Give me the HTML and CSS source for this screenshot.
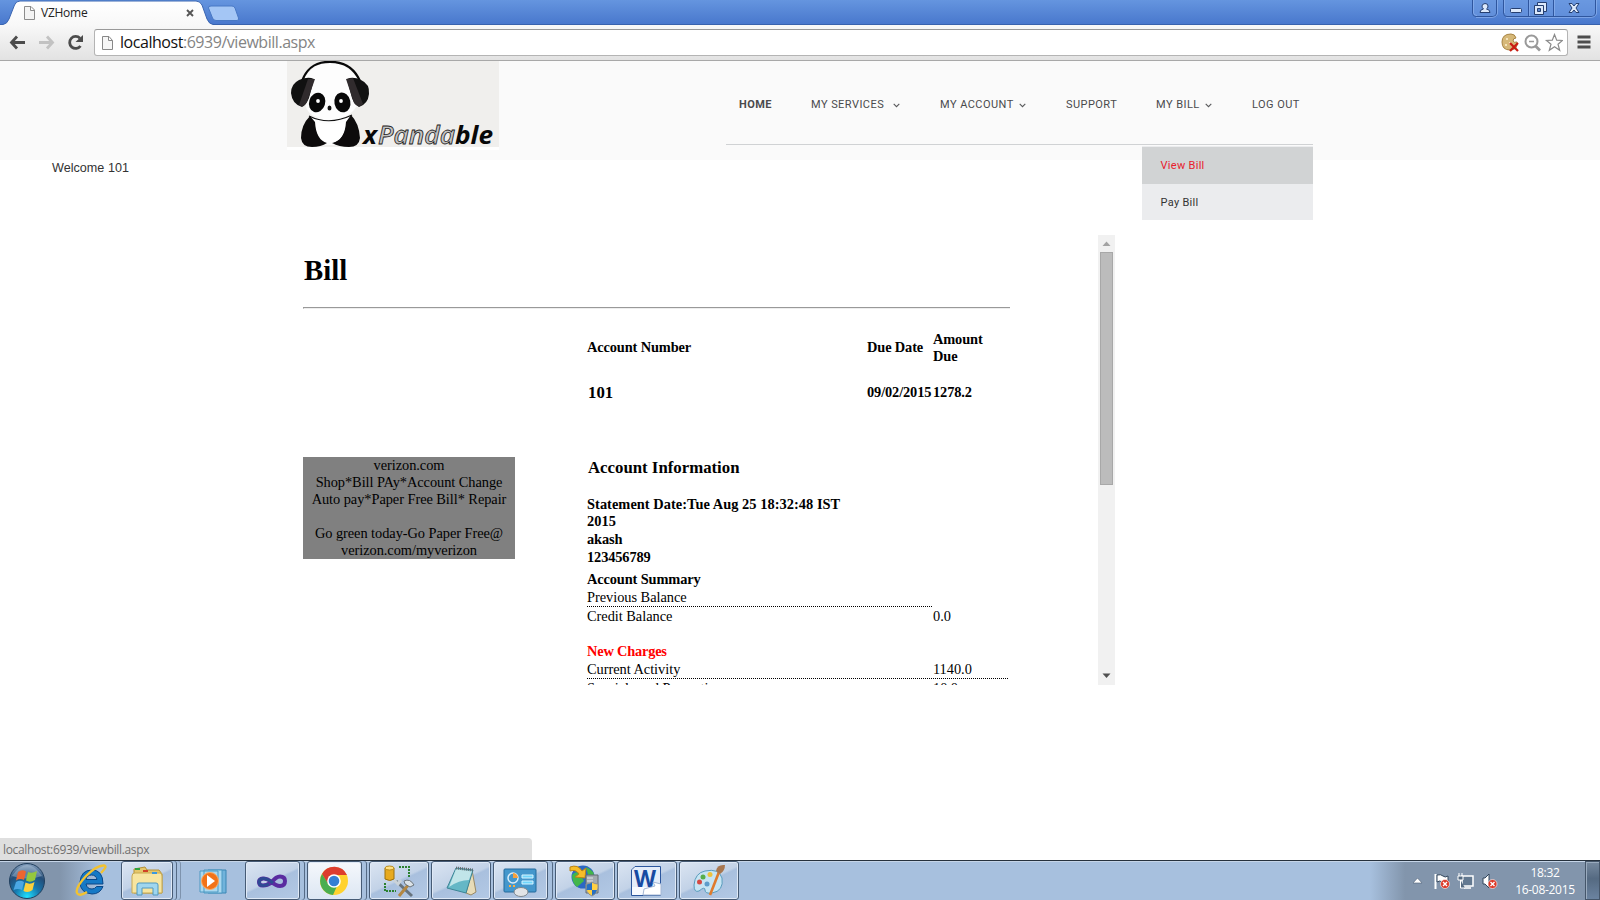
FILE: index.html
```html
<!DOCTYPE html>
<html lang="en">
<head>
<meta charset="utf-8">
<title>VZHome</title>
<link rel="stylesheet" href="styles.css">
</head>
<body>
<div class="screen">
  <header class="titlebar">
    <svg class="tabs" width="260" height="25" viewBox="0 0 260 25">
      <defs><linearGradient id="tabg" x1="0" y1="0" x2="0" y2="1"><stop offset="0" stop-color="#fff"/><stop offset="1" stop-color="#f8f8f8"/></linearGradient></defs>
      <path d="M0 24.5H3Q7 24 9 19L14.500 5Q16 1 20 1H196Q200 1 202 5L207 19Q209 24 213 24.500V25H0Z" fill="url(#tabg)"/>
      <path d="M0 24.500H3Q7 24 9 19L14.500 5Q16 1 20 1H196Q200 1 202 5L207 19Q209 24 213 24.500" fill="none" stroke="#3b66b2"/>
      <path d="M211 6H232Q234 6 235 8L238.500 18Q239 20.500 237 20.500H216Q213.500 20.500 212.500 18L208.500 8Q208 6 211 6Z" fill="#a4c6f5" stroke="#4878c4"/>
      <path d="M24.500 6.500H31L34.500 10V19.500H24.500ZM30.500 6.500V10.500H34.500" fill="#f4f4f4" stroke="#8c8c8c"/>
      <path d="M187 10L193 16M193 10L187 16" stroke="#555" stroke-width="1.900"/>
    </svg>
    <span class="tab-title">VZHome</span>
    <svg class="winbtns" width="128" height="19" viewBox="0 0 128 19">
      <g fill="#6f9be2" fill-opacity=".5" stroke="#2f569e">
        <path d="M.5-1V13Q.5 16.500 4 16.500H21Q24.500 16.500 24.500 13V-1"/>
        <path d="M31.500-1V13Q31.500 16.500 35 16.500H120Q123.500 16.500 123.500 13V-1M56.500 0V16M81.500 0V16"/>
      </g>
      <path d="M1.500 0V13Q2 15.500 5 15.500M25.500 0V14Q24 17.500 20 17.500H4M32.500 0V13M57.500 0V16M82.500 0V16M124.500 0V14Q123 17.500 119 17.500H34" fill="none" stroke="#8db2ee" stroke-opacity=".7"/>
      <g fill="#dce9fb" stroke="#263f70">
        <path d="M13 3.500Q16 3.500 16 6T14.500 9Q18 9.500 18 12.500H8Q8 9.500 11.500 9Q10 8 10 6T13 3.500Z"/>
        <rect x="38.500" y="8.500" width="11" height="4" rx="1"/>
        <path d="M65.500 2.500H74.500V11.500H65.500Z"/><path d="M62.500 5.500H71.500V14.500H62.500Z"/><path d="M65.500 8.500H68.500V11.500H65.500Z" fill="#5c88d2"/>
        <path d="M97 3.500H100L102 6L104 3.500H107L104 8L107 12.500H104L102 10L100 12.500H97L100 8Z"/>
      </g>
    </svg>
  </header>
  <div class="toolbar">
    <svg width="84" height="34" viewBox="0 0 84 34">
      <g fill="none" stroke="#4c4c4c" stroke-width="2.800"><path d="M25 17.500H12M17 11.500L11.500 17.500L17 23.500"/><path d="M39 17.500H52M47 11.500L52.500 17.500L47 23.500" stroke="#c2c2c2"/><path d="M80 13.300A6 6 0 1 0 80.500 21"/></g>
      <path d="M83 10V17H75.500Z" fill="#4c4c4c"/>
    </svg>
    <div class="omnibox">
      <svg width="14" height="18" viewBox="0 0 14 18"><path d="M1.500 2.500H8L11.500 6.500V15.500H1.500ZM7.500 2.500V6.500H11.500" fill="#f6f6f6" stroke="#888"/></svg>
      <span class="url"><b>localhost</b>:6939/viewbill.aspx</span>
      <svg class="omni-icons" width="62" height="20" viewBox="0 0 62 20">
        <path d="M10 1Q14 1 15 5Q12 5 12 8Q13 10 16 9Q17 17 9 17Q1 17 1 9Q1 1 10 1Z" fill="#d6b878" stroke="#a88545"/><path d="M5 5h2v2h-2zM4 11h2v2h-2zM8 9h2v2h-2z" fill="#f4e3bb"/><path d="M9 10L17 18M17 10L9 18" stroke="#c91b12" stroke-width="2.200"/>
        <g fill="none" stroke="#999"><circle cx="30.500" cy="8.500" r="6" stroke-width="2"/><path d="M34.500 13L39 17.500" stroke-width="2.800"/><path d="M28 8.500H33" stroke-width="1.500"/></g>
        <path d="M53.500 1.500L55.700 7.200L61.500 7.500L57 11.200L58.700 17.300L53.500 13.800L48.300 17.300L50 11.200L45.500 7.500L51.300 7.200Z" fill="#fff" stroke="#8b8b8b" stroke-width="1.200"/>
      </svg>
    </div>
    <svg class="menu-icon" width="14" height="14" viewBox="0 0 14 14"><path d="M.5 2H13.500M.5 7H13.500M.5 12H13.500" stroke="#4d4d4d" stroke-width="2.800"/></svg>
  </div>

  <div class="site-head">
    <div class="logo">
      <svg width="212" height="89" viewBox="0 0 212 89">
        <rect width="212" height="86" fill="#f0efed"/><rect y="86" width="212" height="3" fill="#fff"/>
        <path d="M16 20Q24 3 43 1Q62 3 72 20L70 45Q62 57 52 57L64 56L65 80Q44 88 22 80L23 56L34 57Q20 55 18 42Z" fill="#fdfdfd"/>
        <path d="M15 20C21 4 32 .8 43 .8S66 4 73 20" fill="none" stroke="#080808" stroke-width="2.200"/>
        <path d="M27 18Q21 15 12 19Q4 23 4 32Q5 43 15 46Q19 44 22 37Z" fill="#111"/><path d="M21 18L28 18L20 41Q17 47 12 44Z" fill="#302b2d"/>
        <path d="M60 18Q66 15 74 19Q83 23 82 33Q81 43 72 46Q67 43 65 37Z" fill="#111"/><path d="M59 18L66 17L76 43Q71 48 67 42Z" fill="#302b2d"/>
        <ellipse cx="30" cy="41.500" rx="8" ry="10" transform="rotate(18 30 42)" fill="#080808"/><ellipse cx="55.500" cy="41.500" rx="8" ry="10" transform="rotate(-12 55 42)" fill="#080808"/>
        <circle cx="31" cy="40" r="1.900" fill="#fff"/><circle cx="54" cy="40" r="1.900" fill="#fff"/>
        <ellipse cx="42.500" cy="47" rx="2" ry="2.500" fill="#111"/>
        <path d="M22 55Q42 65 65 54" fill="none" stroke="#111" stroke-width="1.200"/>
        <path d="M23 55Q14 64 14 77Q15 86 25 86Q34 86 40 82Q29 79 28 61Z" fill="#0d0b0c"/><path d="M64 54Q72 62 73 77Q72 86 62 86Q52 86 45 82Q58 79 59 61Z" fill="#0d0b0c"/>
        <path d="M29 61Q43 65 58 61Q58 80 43 82Q29 80 29 61Z" fill="#fff"/>
        <g class="brand"><text x="76" y="83" textLength="14" lengthAdjust="spacingAndGlyphs">x</text><text class="brand-outline" x="91" y="83" textLength="77" lengthAdjust="spacingAndGlyphs">Panda</text><text x="168" y="83" textLength="38" lengthAdjust="spacingAndGlyphs">ble</text></g>
      </svg>
    </div>
    <nav class="nav">
      <span class="home">HOME</span>
      <span class="services">MY SERVICES <svg width="7" height="5" viewBox="0 0 7 5"><path d="M.7.800L3.500 3.600L6.300.800"/></svg></span>
      <span class="account">MY ACCOUNT <svg width="7" height="5" viewBox="0 0 7 5"><path d="M.7.800L3.500 3.600L6.300.800"/></svg></span>
      <span class="support">SUPPORT</span>
      <span class="bill-link">MY BILL <svg width="7" height="5" viewBox="0 0 7 5"><path d="M.7.800L3.500 3.600L6.300.800"/></svg></span>
      <span class="logout">LOG OUT</span>
      <div class="dropdown"><div class="item active">View Bill</div><div class="item">Pay Bill</div></div>
    </nav>
  </div>

  <main class="content">
    <p class="welcome">Welcome 101</p>
    <div class="frame">
      <div class="bill">
        <h1>Bill</h1>
        <div class="rule"></div>
        <div class="grid heads"><b class="c2">Account Number</b><b>Due Date</b><b class="amount">Amount<br>Due</b></div>
        <div class="grid values"><b class="c2 big">101</b><b>09/02/2015</b><b>1278.2</b></div>
        <div class="body">
          <div class="promo">verizon.com<br>Shop*Bill PAy*Account Change<br>Auto pay*Paper Free Bill* Repair<br><br>Go green today-Go Paper Free@<br>verizon.com/myverizon</div>
          <div class="info">
            <h2>Account Information</h2>
            <div class="statement">Statement Date:Tue Aug 25 18:32:48 IST<br>2015</div>
            <div class="line bold">akash</div>
            <div class="line bold">123456789</div>
            <div class="line bold summary">Account Summary</div>
            <div class="line dotted short"><span>Previous Balance</span></div>
            <div class="line"><span>Credit Balance</span><span>0.0</span></div>
            <div class="line bold charges">New Charges</div>
            <div class="line dotted"><span>Current Activity</span><span>1140.0</span></div>
            <div class="line"><span>Specials and Promotions</span><span>10.0</span></div>
          </div>
        </div>
      </div>
      <div class="scrollbar">
        <svg width="17" height="17" viewBox="0 0 17 17"><path d="M4.500 11L8.500 6.500L12.500 11Z" fill="#a3a3a3"/></svg>
        <div class="thumb"></div>
        <svg class="down" width="17" height="17" viewBox="0 0 17 17"><path d="M4.500 5.500H12.500L8.500 10Z" fill="#505050"/></svg>
      </div>
    </div>
    <div class="status">localhost:6939/viewbill.aspx</div>
  </main>

  <footer class="taskbar">
    <svg class="start" width="40" height="38" viewBox="0 0 40 38">
      <defs><radialGradient id="orb" cx=".5" cy=".95" r=".9"><stop offset="0" stop-color="#1ee2ff"/><stop offset=".4" stop-color="#1778ae"/><stop offset=".75" stop-color="#244d78"/><stop offset="1" stop-color="#7894b4"/></radialGradient></defs>
      <circle cx="20" cy="19" r="17.500" fill="url(#orb)" stroke="#21405f"/><path d="M5 14Q20 -8 35 14Q20 19 5 14Z" fill="#cfe0ef" opacity=".35"/>
      <path d="M11 10Q15 7 19 9.500L17 18Q13 16 9 18.500Z" fill="#ee6530"/><path d="M21 10Q25 12 30 9L28 18Q23 21 19 18.500Z" fill="#95c83d"/><path d="M9 20Q13 17.500 17 20L15 28Q11 26 6.500 28Z" fill="#4ba7e4"/><path d="M18.500 20.500Q23 23 27.500 20L25.500 28Q21 31.500 16.500 29Z" fill="#fbd03c"/>
    </svg>
    <svg class="ie" width="34" height="34" viewBox="0 0 34 34"><path d="M29 20H12Q13 25 18 25Q21 25 22.500 22.500H29Q26 30 18 30Q6 29 6 18Q7 6 18 6Q29 6 29 20ZM12 15.500H23Q22 11 17.500 11T12 15.500Z" fill="#1579c6" stroke="#0b4787"/><path d="M27 9Q34 2 30 1.500Q23 1 12 12Q1 24 3 29Q5 33 13 28" fill="none" stroke="#f2c230" stroke-width="2.400"/></svg>
    <div class="task t-explorer"><svg width="34" height="32" viewBox="0 0 34 32"><path d="M4 4L15 2L17 5H29L32 9V28H4Z" fill="#e5c76b" stroke="#b49138"/><path d="M2 11Q2 8 5 8H30Q32 8 32 11V28H2Z" fill="#f7e5a0" stroke="#c7a952"/><path d="M5 3h5v2H5z" fill="#2ea33e"/><path d="M13 5h5v2h-5z" fill="#d14226"/><path d="M22 7h5v2h-5z" fill="#3a99e0"/><path d="M7 30V20Q7 18 9 18H26Q28 18 28 20V30H23V23H12V30Z" fill="#9fd6ef" stroke="#5198bf"/></svg></div>
    <svg class="wmp" width="32" height="30" viewBox="0 0 32 30"><path d="M10 4H28V27H10Z" fill="#71b3db" stroke="#3b86b4"/><path d="M6 4H24V27H6ZM2 5H20V26H2Z" fill="#aad8ef" stroke="#4c99c3"/><circle cx="12" cy="15" r="8.500" fill="#f27318" stroke="#fbac64"/><path d="M9 9L17 15L9 21Z" fill="#fff"/></svg>
    <div class="task t-vs"><svg width="34" height="22" viewBox="0 0 34 22"><path d="M17 12Q21 6.500 25 6.500Q30 6.500 30 11Q30 16 25 16Q21 16 16 11.500Q12 8 8 8.500Q4 9 4 12Q4 15.500 8 15.500Q12 15.500 17 12" fill="none" stroke="#5a2ca0" stroke-width="4"/><path d="M18 13Q12 8 8 8.500Q4 9 4 12Q4 15.500 8 15.500Q11 15.500 14 14" fill="none" stroke="#2f4a94" stroke-width="3"/></svg></div>
    <div class="task t-chrome"><svg width="30" height="30" viewBox="0 0 30 30"><circle cx="15" cy="15" r="14" fill="#ffd22e"/><path d="M3 8A14 14 0 0 1 28 9H15L9 18Z" fill="#dd3d2e"/><path d="M3 8L10 19L18 20L14 29A14 14 0 0 1 3 8Z" fill="#4bae4f"/><circle cx="15" cy="15" r="6.800" fill="#fff"/><circle cx="15" cy="15" r="5.300" fill="#357fd3"/></svg></div>
    <div class="task t-tools"><svg width="34" height="34" viewBox="0 0 34 34"><path d="M3 4V15Q8 18 12 15V4Z" fill="#e7aa20" stroke="#9c710c"/><ellipse cx="7.500" cy="4" rx="4.500" ry="2" fill="#ffe080" stroke="#b98b1c"/><path d="M17 3H27V13M3 19V27H14" fill="none" stroke="#2b8130" stroke-width="2" stroke-dasharray="2 1"/><path d="M14 17L30 32" stroke="#67737d" stroke-width="3"/><path d="M27 20L17 32" stroke="#b38742" stroke-width="3"/><path d="M22 17Q28 14 32 21L28 23L23 20Z" fill="#dce3e8" stroke="#6b757d"/><path d="M12 16L16 20L19 16" fill="none" stroke="#cad2d8" stroke-width="3"/></svg></div>
    <div class="task t-note"><svg width="32" height="32" viewBox="0 0 32 32"><path d="M27 5L31 27L26 30L21 28Z" fill="#e8dcb8" stroke="#998964"/><path d="M11 3L28 5L21 28L2 23Z" fill="#65b7c6" stroke="#3e8595"/><path d="M11 4L27 6L24 15Q14 15 4 22Z" fill="#c1e5e9"/><path d="M11 3L28 5" stroke="#646b70" stroke-width="3" stroke-dasharray="1 1"/></svg></div>
    <div class="task t-panel"><svg width="34" height="32" viewBox="0 0 34 32"><rect x="1" y="4" width="32" height="23" rx="1" fill="#4497cc" stroke="#246a9c"/><circle cx="10" cy="13" r="5" fill="none" stroke="#d9edf9" stroke-width="1.500"/><path d="M10 13V8A5 5 0 0 1 15 13Z" fill="#f6a23e"/><path d="M19 10h11v3h-11zM19 16h11v3h-11z" fill="#70d5fb" stroke="#d6f4ff"/><path d="M6 21h2M10 21h2" stroke="#ffae3d" stroke-width="2"/><ellipse cx="18" cy="27" rx="7" ry="4.500" fill="#e1e4e7" stroke="#7e878e"/></svg></div>
    <div class="task t-globe"><svg width="34" height="34" viewBox="0 0 34 34"><circle cx="15" cy="13" r="11.500" fill="#2b67c4"/><path d="M4 11Q9 5 13 12L16 17L9 23Q4 19 4 11ZM18 3Q27 7 26 13L20 11Z" fill="#42b64a"/><path d="M2 3Q10 0 14 7L18 4L17 14L7 13L11 10Q8 5 2 7Z" fill="#f6bd28" stroke="#ba8414"/><path d="M18 11h12v18h-12z" fill="#a2a9af" stroke="#646d75"/><path d="M19 14h6M19 17h6" stroke="#e4e8eb"/><path d="M18 20Q22 20 24 18Q26 20 30 20Q31 29 24 32Q17 29 18 20Z" fill="#ffd043" stroke="#8a8f97"/><path d="M18.500 20.500Q22 20 24 18.500V26H18.500ZM24 26H29Q28 30 24 31.500Z" fill="#276fc3"/></svg></div>
    <div class="task t-word"><svg width="32" height="32" viewBox="0 0 32 32"><path d="M5 1.500H30.500V30.500H1.500V5Z" fill="#f7faff" stroke="#2b569d"/><path d="M6 2H30V22H2V5Z" fill="#e4edfa"/><text class="word" x="15" y="22" textLength="22" lengthAdjust="spacingAndGlyphs">W</text><path d="M14 24L25 21L23 17L31 19V30H13Z" fill="#fff" stroke="#a4b7d4"/></svg></div>
    <div class="task t-paint"><svg width="34" height="34" viewBox="0 0 34 34"><path d="M13 7Q27 4 30 14Q32 27 20 29Q13 30 13 26Q13 22 7 27Q2 29 2 21Q3 9 13 7Z" fill="#c7e5f3" stroke="#589bbc"/><circle cx="11" cy="13" r="2.500" fill="#56ae49"/><circle cx="18" cy="10.500" r="2.500" fill="#efc23c"/><circle cx="7.500" cy="18" r="2.500" fill="#d54a42"/><circle cx="15" cy="20" r="2.500" fill="#5d9dca"/><path d="M27 8L18 31" stroke="#df7b2c" stroke-width="2.600"/><path d="M24 7Q25 0 33 1Q33 7 28 10Z" fill="#a87750"/></svg></div>
    <div class="tray">
      <svg width="85" height="18" viewBox="0 0 85 18">
        <path d="M0 11L4.500 6L9 11Z" fill="#fff" stroke="#4f6278" stroke-width=".6"/>
        <path d="M22.500 2V17" stroke="#fff" stroke-width="2"/><path d="M24 3Q28 2 30 4T35 4V11Q31 12 29 10T24 10Z" fill="#fff" stroke="#33475d"/><circle cx="32" cy="12" r="4.500" fill="#dc3827" stroke="#fff" stroke-width=".6"/><path d="M30 10L34 14M34 10L30 14" stroke="#fff" stroke-width="1.400"/>
        <path d="M49 4H60V14H49ZM51 16H58" fill="#637991" stroke="#fff" stroke-width="1.500"/><path d="M46 1V4M49 1V4M45 4H50V8H45ZM47.500 8V16H52" fill="#556a81" stroke="#fff"/>
        <path d="M70 6H72L76 2V16L72 12H70Z" fill="#fff" stroke="#33475d"/><circle cx="79.500" cy="12" r="4.500" fill="#dc3827" stroke="#fff" stroke-width=".6"/><path d="M77.500 10L81.500 14M81.500 10L77.500 14" stroke="#fff" stroke-width="1.400"/>
      </svg>
      <div class="clock">18:32<br>16-08-2015</div>
      <div class="peek"></div>
    </div>
  </footer>
</div>
</body>
</html>
```

FILE: styles.css
```css
* { box-sizing: border-box; }
body { margin: 0; background: #fff; }
svg { display: block; flex: none; }
.screen { width: 1600px; height: 900px; display: flex; flex-direction: column; overflow: hidden; font-family: "Open Sans", "Noto Sans", sans-serif; }

.titlebar { position: relative; flex: none; height: 25px; background: linear-gradient(#6595df, #4978cd); border-bottom: 1px solid #3862ad; display: flex; justify-content: space-between; }
.tab-title { position: absolute; left: 41px; top: 4px; font-size: 12px; line-height: 18px; letter-spacing: -.25px; color: #222; }

.toolbar { flex: none; height: 36px; display: flex; align-items: flex-start; background: linear-gradient(#f8f8f8, #e2e2e2); border-bottom: 1px solid #a8a8a8; }
.omnibox { margin: 4px 0 0 10px; width: 1474px; height: 27px; display: flex; align-items: center; background: #fff; border: 1px solid #b4b4b4; border-top-color: #999; border-radius: 3px; padding-left: 6px; }
.url { margin: -2px 0 0 5px; font-size: 16px; line-height: 24px; letter-spacing: -.46px; color: #848484; white-space: nowrap; }
.url b { font-weight: 400; color: #111; }
.omni-icons { margin: 0 4px 0 auto; }
.menu-icon { margin: 10px 0 0 9px; }

.site-head { flex: none; height: 99px; display: flex; background: #fafafa; }
.logo { margin-left: 287px; width: 212px; }
.brand { font: italic 700 25px "Open Sans", sans-serif; fill: #080808; }
.brand-outline { font-weight: 600; fill: #c4c3c2; stroke: #222; stroke-width: .8px; }
.nav { position: relative; margin-left: 227px; width: 587px; height: 84px; border-bottom: 1px solid #d0d2d4; padding: 36px 0 0 13px; display: grid; grid-template-columns: 72px 129px 126px 90px 96px 60px; align-items: start; font: 11px/16px Roboto, sans-serif; color: #4a4a4c; letter-spacing: .45px; white-space: nowrap; }
.nav > span { display: flex; align-items: center; }
.nav svg { fill: none; stroke: #58595b; stroke-width: 1.1px; }
.home { font-weight: 700; }
.services svg { margin-left: 9px; }
.account svg, .bill-link svg { margin-left: 5px; }
.dropdown { position: absolute; left: 416px; top: 85px; width: 171px; border-top: 1px solid #ebecee; letter-spacing: .3px; }
.item { height: 36px; padding-left: 18.5px; line-height: 38px; background: #ebecee; color: #333; }
.active { height: 37px; background: #d1d3d4; color: #e8202c; }

.content { flex: 1; display: flex; flex-direction: column; align-items: flex-start; min-height: 0; }
.welcome { margin: 1px 0 0 52px; font: 12.6px/15px "Liberation Sans", sans-serif; letter-spacing: .02px; color: #333; }
.frame { flex: none; margin: 59px 0 0 303px; width: 812px; height: 450px; display: flex; justify-content: space-between; overflow: hidden; }
.bill { width: 707px; font: 14.4px/17px "Liberation Serif", serif; color: #000; letter-spacing: -.13px; }
.bill h1 { margin: 0; padding: 17px 0 0 1px; font-size: 28.8px; line-height: 36px; letter-spacing: 0; }
.rule { margin-top: 19px; height: 2px; border-top: 1px solid #999; border-left: 1px solid #999; border-bottom: 1px solid #eee; }
.grid { display: grid; grid-template-columns: 284px 280px 66px 77px; align-items: center; }
.c2 { grid-column: 2; }
.heads { margin-top: 21px; height: 34px; grid-template-rows: 34px; }
.amount { padding-top: 2px; }
.values { margin-top: 19px; height: 18px; }
.big { font-size: 16.8px; padding-left: 1px; letter-spacing: 0; }
.body { margin-top: 56px; display: flex; align-items: flex-start; }
.promo { width: 212px; height: 102px; background: #808080; text-align: center; letter-spacing: -.06px; }
.info { margin-left: 72px; width: 421px; }
.info h2 { margin: 0; padding: 1px 0 0 1px; font-size: 16.8px; line-height: 20px; letter-spacing: 0; }
.statement { margin-top: 18px; font-weight: 700; letter-spacing: .04px; }
.line { display: grid; grid-template-columns: 346px 75px; height: 18px; line-height: 18px; letter-spacing: -.04px; }
.bold { font-weight: 700; letter-spacing: -.13px; }
.summary { margin-top: 4px; }
.dotted { height: 19px; border-bottom: 1px dotted #000; }
.short { width: 345px; }
.charges { margin-top: 17px; color: #f00; letter-spacing: -.2px; }

.scrollbar { width: 17px; height: 450px; display: flex; flex-direction: column; background: #f1f1f1; }
.thumb { margin: 0 2px; height: 233px; background: #bcbcbc; border: 1px solid #a8a8a8; }
.down { margin-top: auto; }

.status { margin-top: auto; width: 532px; height: 22px; padding-left: 3px; background: #dfdfdf; border-top-right-radius: 4px; font-size: 12px; line-height: 23px; letter-spacing: -.35px; color: #6f6f6f; }

.taskbar { flex: none; height: 40px; display: flex; align-items: center; background: linear-gradient(90deg, #8295ac 0, #8295ac 60px, #a7c0de 100px, #a7c0de 1370px, #8295ac 1405px, #8295ac 1600px); border-top: 1px solid #26313d; box-shadow: inset 0 1px #c5d5e8; }
.start { margin-left: 7px; }
.ie { margin-left: 27px; }
.task { flex: none; width: 60px; height: 39px; display: flex; align-items: center; justify-content: center; border: 1px solid #465b75; border-radius: 3px; background: linear-gradient(155deg, #dbe5f2 0%, #c2d2e7 48%, #a9c0de 52%, #b3c9e5 100%); box-shadow: inset 0 0 0 1px #dfe9f6; }
.t-explorer { margin-left: 13px; width: 52px; box-shadow: inset 0 0 0 1px #dfe9f6, 3px 0 0 #a7c0de, 4px 0 0 #556b86, 7px 0 0 #a7c0de, 8px 0 0 #7e93ad; }
.wmp { margin: 0 15px 0 25px; }
.t-vs, .t-chrome { width: 55px; box-shadow: inset 0 0 0 1px #dfe9f6, 4px 0 0 #a7c0de, 5px 0 0 #556b86; }
.t-vs { padding: 1px 2px 0 0; }
.t-chrome { margin-left: 7px; padding-right: 2px; background: linear-gradient(#f5f8fc, #dce6f3); }
.t-tools { margin-left: 7px; }
.t-note, .t-word, .t-paint { margin-left: 2px; }
.t-word { padding-right: 2px; }
.t-panel { margin-left: 2px; padding-right: 2px; width: 55px; box-shadow: inset 0 0 0 1px #dfe9f6, 4px 0 0 #a7c0de, 5px 0 0 #556b86; }
.t-globe { margin-left: 7px; }
.word { font: 700 24px "Open Sans", sans-serif; fill: #174aa2; text-anchor: middle; }
.tray { margin-left: auto; height: 39px; display: flex; align-items: center; }
.clock { margin: 0 10px 0 17px; width: 60px; text-align: center; font-size: 12px; line-height: 17px; letter-spacing: -.3px; color: #fff; white-space: nowrap; }
.peek { width: 15px; height: 39px; border: 1px solid #45566a; background: linear-gradient(#76899f, #556a82 45%, #6b83a0); box-shadow: inset 1px 1px #9aabbe; }
```
